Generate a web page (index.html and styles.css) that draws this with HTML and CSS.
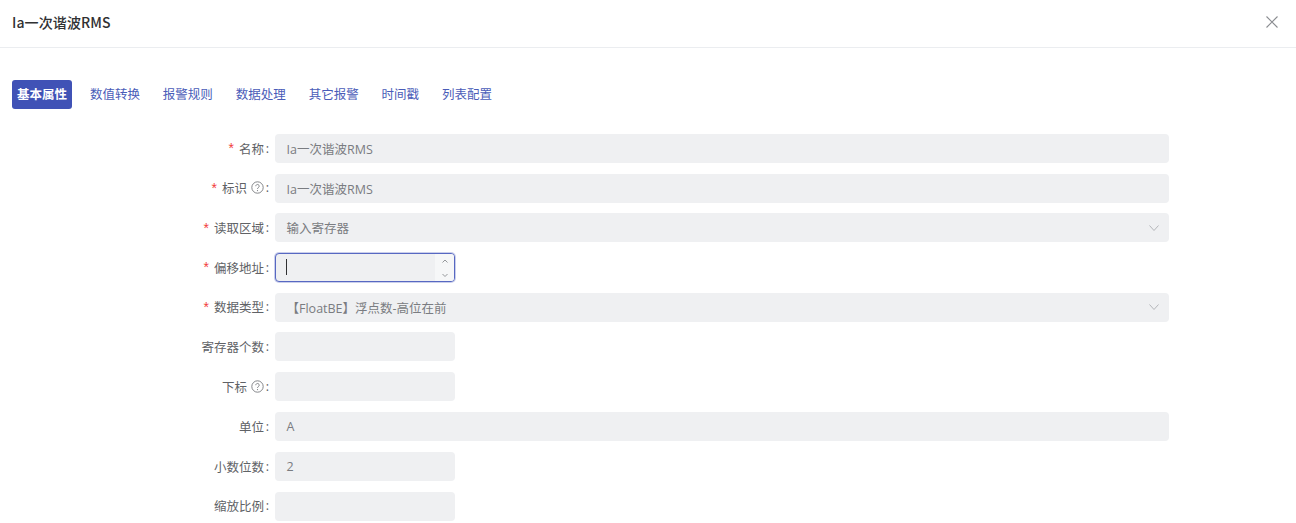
FILE: index.html
```html
<!DOCTYPE html>
<html lang="zh-CN">
<head>
<meta charset="utf-8">
<title>Ia一次谐波RMS</title>
<link rel="stylesheet" href="styles.css">
</head>
<body>
<header class="head">
  <h1 class="title">Ia一次谐波RMS</h1>
  <svg class="close" width="14" height="14" viewBox="0 0 14 14"><path d="M1.5 1.5l11 11M12.5 1.5l-11 11" stroke="#8a8c90" stroke-width="1.1" fill="none"/></svg>
</header>
<nav class="tabs">
  <span class="tab active">基本属性</span>
  <span class="tab">数值转换</span>
  <span class="tab">报警规则</span>
  <span class="tab">数据处理</span>
  <span class="tab">其它报警</span>
  <span class="tab">时间戳</span>
  <span class="tab">列表配置</span>
</nav>
<form class="form">
  <div class="row">
    <label class="label"><i class="req">*</i>名称<span class="colon">:</span></label>
    <div class="field wide">Ia一次谐波RMS</div>
  </div>
  <div class="row">
    <label class="label"><i class="req">*</i>标识<svg class="help" width="13" height="13" viewBox="0 0 13 13"><circle cx="6.5" cy="6.5" r="5.7" fill="none" stroke="#77797e" stroke-width=".9"/><path d="M4.8 5.2a1.7 1.7 0 1 1 2.6 1.4c-.6.4-.9.7-.9 1.4" fill="none" stroke="#77797e" stroke-width=".9"/><circle cx="6.5" cy="9.6" r=".6" fill="#77797e"/></svg><span class="colon after-help">:</span></label>
    <div class="field wide">Ia一次谐波RMS</div>
  </div>
  <div class="row">
    <label class="label"><i class="req">*</i>读取区域<span class="colon">:</span></label>
    <div class="field wide select">输入寄存器<svg class="chev" width="12" height="8" viewBox="0 0 12 8"><path d="M1.5 1.5l4.5 5 4.5-5" fill="none" stroke="#b4b6ba" stroke-width="1"/></svg></div>
  </div>
  <div class="row">
    <label class="label"><i class="req">*</i>偏移地址<span class="colon">:</span></label>
    <div class="field short focus"><span class="caret"></span>
      <div class="spin">
        <svg width="8" height="6" viewBox="0 0 8 6"><path d="M1.5 4.5l2.5-2.5 2.5 2.5" fill="none" stroke="#8a8c90" stroke-width=".9"/></svg>
        <svg width="8" height="6" viewBox="0 0 8 6"><path d="M1.5 2l2.5 2.5 2.5-2.5" fill="none" stroke="#8a8c90" stroke-width=".9"/></svg>
      </div>
    </div>
  </div>
  <div class="row">
    <label class="label"><i class="req">*</i>数据类型<span class="colon">:</span></label>
    <div class="field wide select">【FloatBE】浮点数-高位在前<svg class="chev" width="12" height="8" viewBox="0 0 12 8"><path d="M1.5 1.5l4.5 5 4.5-5" fill="none" stroke="#b4b6ba" stroke-width="1"/></svg></div>
  </div>
  <div class="row">
    <label class="label">寄存器个数<span class="colon">:</span></label>
    <div class="field short"></div>
  </div>
  <div class="row row-loose">
    <label class="label">下标<svg class="help" width="13" height="13" viewBox="0 0 13 13"><circle cx="6.5" cy="6.5" r="5.7" fill="none" stroke="#77797e" stroke-width=".9"/><path d="M4.8 5.2a1.7 1.7 0 1 1 2.6 1.4c-.6.4-.9.7-.9 1.4" fill="none" stroke="#77797e" stroke-width=".9"/><circle cx="6.5" cy="9.6" r=".6" fill="#77797e"/></svg><span class="colon after-help">:</span></label>
    <div class="field short"></div>
  </div>
  <div class="row">
    <label class="label">单位<span class="colon">:</span></label>
    <div class="field wide">A</div>
  </div>
  <div class="row">
    <label class="label">小数位数<span class="colon">:</span></label>
    <div class="field short">2</div>
  </div>
  <div class="row">
    <label class="label">缩放比例<span class="colon">:</span></label>
    <div class="field short"></div>
  </div>
</form>
</body>
</html>
```
FILE: styles.css
```css
* { box-sizing: border-box; }
html, body { margin: 0; height: 100%; overflow: hidden; background: #fff; }
body { font-family: "Open Sans", "Noto Sans CJK SC", sans-serif; font-size: 12.5px; color: #606266; }
.head { height: 48px; padding: 0 17px 0 12px; display: flex; align-items: center; justify-content: space-between; border-bottom: 1px solid #ebedf0; }
.close { margin-top: -3px; }
.title { margin: 0 0 3px; font-family: "Noto Sans CJK SC", sans-serif; font-size: 14px; font-weight: 500; letter-spacing: .1px; color: #303133; line-height: 20px; }
.tabs { display: flex; gap: 12.9px; padding: 32px 12px 0; }
.tab { height: 29px; line-height: 29px; padding: 0 5px; color: #4a5cb8; border-radius: 3px; }
.active { background: #4052b6; color: #fff; font-weight: 700; }
.form { padding-top: 24.85px; display: flex; flex-direction: column; gap: 10.7px; }
.row { display: flex; height: 29px; align-items: center; }
.row-loose { margin-bottom: .6px; }
.label { width: 275px; padding-right: 6px; text-align: right; color: #606266; display: flex; justify-content: flex-end; align-items: center; margin-top: -.4px; }
.colon { margin-left: 1px; width: 4px; }
.after-help { margin-left: 1px; }
.req { color: #f23c3c; font-style: normal; font-size: 14px; margin-right: 5px; font-family: "Liberation Sans", sans-serif; }
.help { margin-left: 4px; }
.field { height: 29px; background: #eff0f2; border-radius: 4px; padding: 0 11.5px; display: flex; align-items: center; color: #7a7c81; position: relative; }
.wide { width: 894px; }
.short { width: 180px; }
.select { justify-content: space-between; padding-right: 9px; }
.focus { border: 1px solid #5768c2; box-shadow: 0 0 0 1px rgba(79,96,189,.3); padding-left: 10px; }
.caret { width: 1px; height: 16px; background: #303133; }
.spin { position: absolute; right: 0; top: 0; bottom: 0; width: 19px; background: #f6f7f8; border-radius: 0 3px 3px 0; display: flex; flex-direction: column; align-items: center; justify-content: space-between; padding: 4px 0 3px; }
```
